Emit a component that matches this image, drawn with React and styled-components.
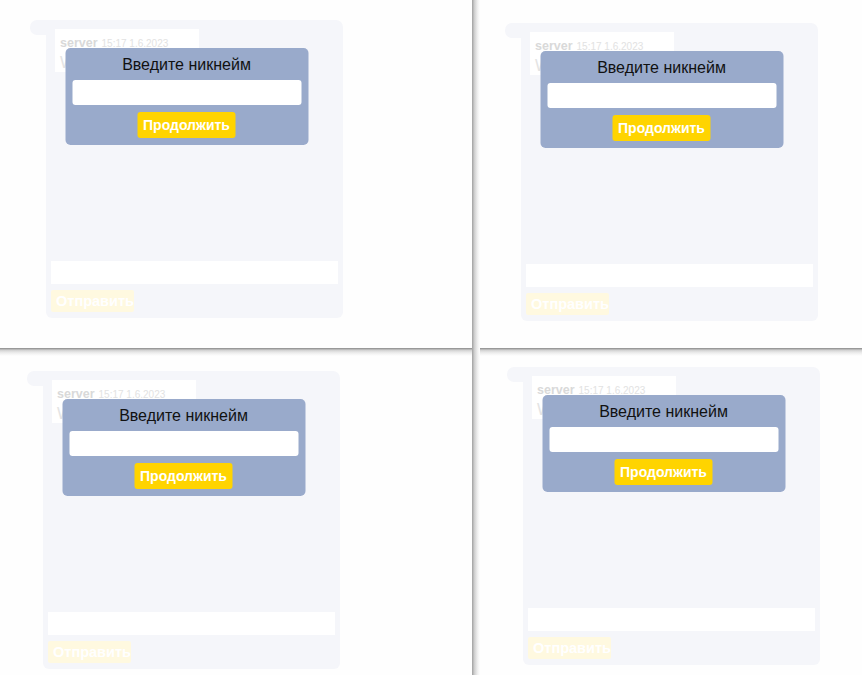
import React from 'react';
import styled, { createGlobalStyle } from 'styled-components';

const GlobalStyle = createGlobalStyle`
  html, body {
    margin: 0;
    padding: 0;
    background: #fefefe;
    font-family: "Liberation Sans", Arial, sans-serif;
  }
`

const Desk = styled.div`
  width: 862px;
  height: 675px;
  display: grid;
  grid-template-columns: 472px 8px 1fr;
  grid-template-rows: 348px 8px 1fr;
  overflow: hidden;
  background: #fefefe;
`
const Pane = styled.div`
  grid-column: ${props => props.$col};
  grid-row: ${props => props.$row};
  padding: ${props => props.$top}px 0 0 ${props => props.$left}px;
  overflow: hidden;
  background: #fefefe;
`
const VDivider = styled.div`
  grid-column: 2;
  grid-row: 1 / 4;
  z-index: 2;
  background: linear-gradient(90deg, #a4a4a4 0, #b0b0b0 1px, #cacaca 2px, #e0e0e0 4px, #f3f3f3 6px, #fefefe 8px);
`
const HDivider = styled.div`
  grid-column: 1 / 4;
  grid-row: 2;
  z-index: 1;
  background: linear-gradient(180deg, #8e8e8e 0, #a4a4a4 1px, #cfcfcf 2px, #e6e6e6 4px, #f4f4f4 6px, #fefefe 8px);
`

const Frame = styled.div`
  position: relative;
  width: 313px;
`
const Tab = styled.div`
  height: 15px;
  background: #f5f6fa;
  border-radius: 7px 7px 0 7px;
`
const Body = styled.div`
  margin-left: 16px;
  height: 283px;
  box-sizing: border-box;
  padding: 0 5px 6px 5px;
  background: #f5f6fa;
  border-radius: 0 0 6px 6px;
  display: flex;
  flex-direction: column;
`
const MessageList = styled.div`
  flex: 1;
  margin: -6px 0 0 4px;
`
const Message = styled.div`
  width: 144px;
  height: 43px;
  box-sizing: border-box;
  padding: 4px 5px;
  background: #fff;
  overflow: hidden;
  white-space: nowrap;
`
const Author = styled.span`
  font-size: 12.5px;
  font-weight: bold;
  color: #d9d9d9;
`
const Time = styled.span`
  margin-left: 4px;
  font-size: 10px;
  color: #e2e2e2;
`
const Text = styled.div`
  margin-top: 3px;
  font-size: 16px;
  color: #e4e4e4;
`
const ChatInput = styled.div`
  height: 23px;
  background: #fff;
`
const SendButton = styled.div`
  margin-top: 6px;
  width: 83px;
  height: 22px;
  box-sizing: border-box;
  padding: 3px 0 0 5px;
  background: #fff9e0;
  border-radius: 2px;
  color: #fff;
  font-size: 14.5px;
  font-weight: bold;
`

const Modal = styled.div`
  position: absolute;
  top: 28px;
  left: 50%;
  transform: translateX(-50%);
  width: 243px;
  height: 97px;
  box-sizing: border-box;
  padding: 7px;
  background: #99aacb;
  border-radius: 5px;
  display: flex;
  flex-direction: column;
  align-items: center;
`
const ModalTitle = styled.div`
  font-size: 16px;
  line-height: 19px;
  color: #111;
`
const NickInput = styled.input`
  margin-top: 6px;
  width: 100%;
  height: 25px;
  box-sizing: border-box;
  border: none;
  border-radius: 3px;
  background: #fff;
  outline: none;
  font-family: inherit;
`
const ContinueButton = styled.button`
  margin-top: 7px;
  height: 26px;
  padding: 0 6px;
  border: none;
  border-radius: 3px;
  background: #ffd400;
  color: #fff;
  font-family: "Liberation Sans", Arial, sans-serif;
  font-size: 14px;
  font-weight: bold;
`

function ChatWindow() {
  return (
    <Frame>
      <Tab />
      <Body>
        <MessageList>
          <Message>
            <Author>server</Author>
            <Time>15:17 1.6.2023</Time>
            <Text>W</Text>
          </Message>
        </MessageList>
        <ChatInput />
        <SendButton>Отправить</SendButton>
      </Body>
      <Modal>
        <ModalTitle>Введите никнейм</ModalTitle>
        <NickInput />
        <ContinueButton>Продолжить</ContinueButton>
      </Modal>
    </Frame>
  )
}

const panes = [
  { col: 1, row: 1, left: 30, top: 20 },
  { col: 3, row: 1, left: 25, top: 23 },
  { col: 1, row: 3, left: 27, top: 15 },
  { col: 3, row: 3, left: 27, top: 11 },
];

export default function App() {
  return (
    <>
      <GlobalStyle />
      <Desk>
        { panes.map((p, i) => (
          <Pane key={i} $col={p.col} $row={p.row} $left={p.left} $top={p.top}>
            <ChatWindow />
          </Pane>
        )) }
        <HDivider />
        <VDivider />
      </Desk>
    </>
  )
}
